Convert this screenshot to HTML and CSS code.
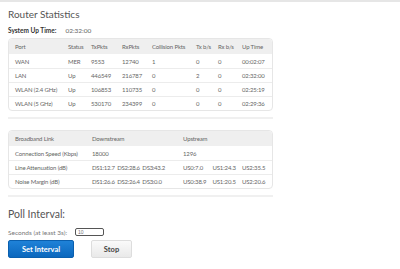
FILE: index.html
```html
<!DOCTYPE html>
<html lang="en">
<head>
  <meta charset="UTF-8">
  <title>Router Statistics</title>
  <link rel="stylesheet" href="styles.css">
</head>
<body>
  <div class="top-rule"></div>
  <main class="page">
    <h1>Router Statistics</h1>
    <p class="uptime"><b>System Up Time:</b><span>02:32:00</span></p>

    <table class="stats port-table">
      <colgroup>
        <col style="width:53px"><col style="width:23px"><col style="width:31px"><col style="width:30px">
        <col style="width:44px"><col style="width:22px"><col style="width:24px"><col>
      </colgroup>
      <thead>
        <tr><th>Port</th><th>Status</th><th>TxPkts</th><th>RxPkts</th><th>Collision Pkts</th><th>Tx b/s</th><th>Rx b/s</th><th>Up Time</th></tr>
      </thead>
      <tbody>
        <tr><td>WAN</td><td>MER</td><td>9553</td><td>12740</td><td>1</td><td>0</td><td>0</td><td>00:02:07</td></tr>
        <tr><td>LAN</td><td>Up</td><td>446549</td><td>216787</td><td>0</td><td>2</td><td>0</td><td>02:32:00</td></tr>
        <tr><td>WLAN (2.4 GHz)</td><td>Up</td><td>106853</td><td>110735</td><td>0</td><td>0</td><td>0</td><td>02:25:19</td></tr>
        <tr><td>WLAN (5 GHz)</td><td>Up</td><td>530170</td><td>234399</td><td>0</td><td>0</td><td>0</td><td>02:29:36</td></tr>
      </tbody>
    </table>

    <hr class="divider">

    <table class="stats link-table">
      <colgroup>
        <col style="width:77px"><col style="width:91px"><col>
      </colgroup>
      <thead>
        <tr><th>Broadband Link</th><th>Downstream</th><th>Upstream</th></tr>
      </thead>
      <tbody>
        <tr><td>Connection Speed (Kbps)</td><td>18000</td><td>1296</td></tr>
        <tr><td>Line Attenuation (dB)</td><td class="multi down"><span>DS1:12.7</span><span>DS2:28.6</span><span>DS3:43.2</span></td><td class="multi up"><span>US0:7.0</span><span>US1:24.3</span><span>US2:35.5</span></td></tr>
        <tr><td>Noise Margin (dB)</td><td class="multi down"><span>DS1:26.6</span><span>DS2:26.4</span><span>DS3:0.0</span></td><td class="multi up"><span>US0:38.9</span><span>US1:20.5</span><span>US2:20.6</span></td></tr>
      </tbody>
    </table>

    <hr class="divider">

    <h2>Poll Interval:</h2>
    <div class="poll-row">
      <label for="pollSecs">Seconds (at least 3s):</label>
      <input id="pollSecs" type="text" placeholder="10">
    </div>
    <div class="actions">
      <button class="btn btn-primary">Set Interval</button>
      <button class="btn btn-plain">Stop</button>
    </div>
  </main>
</body>
</html>
```

FILE: styles.css
```css
* {
  margin: 0;
  padding: 0;
  box-sizing: border-box;
}
body {
  font-family: 'Lato', 'Open Sans', sans-serif;
  background-color: #fff;
  color: #666;
}
.top-rule {
  height: 2px;
  background-color: #e6e6e6;
}
.page {
  padding: 0 8px;
  width: 281px;
}
h1 {
  font-size: 10px;
  font-weight: 400;
  color: #555;
  margin-top: 6px;
  line-height: 12px;
}
.uptime {
  font-size: 6.5px;
  margin-top: 6px;
  line-height: 10px;
  color: #444;
}
.uptime b {
  font-weight: 700;
  color: #333;
}
.uptime span {
  margin-left: 9px;
  color: #666;
}
.stats {
  width: 265px;
  border-collapse: separate;
  border-spacing: 0;
  table-layout: fixed;
  border: 1px solid #e6e6e6;
  border-radius: 4px;
  font-size: 6px;
  letter-spacing: -0.15px;
  color: #666;
  margin-top: 2px;
}
.stats th {
  background-color: #efefef;
  font-weight: 400;
  text-align: left;
  height: 15px;
  line-height: 15px;
  padding: 0 0 0 6px;
  white-space: nowrap;
}
.stats th:first-child {
  border-top-left-radius: 4px;
}
.stats th:last-child {
  border-top-right-radius: 4px;
}
.stats td {
  height: 14px;
  line-height: 13px;
  padding: 0 0 0 6px;
  white-space: nowrap;
  border-top: 1px solid #ececec;
}
.stats tbody tr:first-child td {
  border-top: none;
}
.multi span {
  display: inline-block;
}
.multi.down span {
  min-width: 21px;
  margin-right: 2.5px;
  letter-spacing: -0.25px;
}
.multi.up span {
  width: 29.5px;
}
.divider {
  border: none;
  height: 2px;
  background-color: #f0f0f0;
  width: 265px;
  margin: 6px 0 11px;
}
h2 {
  font-size: 10.5px;
  font-weight: 400;
  color: #555;
  margin-top: 8px;
  line-height: 12px;
}
.poll-row {
  display: flex;
  align-items: center;
  gap: 8px;
  margin-top: 8px;
  font-size: 6.5px;
  color: #777;
  height: 8px;
}
.poll-row input {
  width: 29px;
  height: 8px;
  border: 1px solid #555;
  border-radius: 2px;
  font-size: 5px;
  padding-left: 2px;
  color: #aaa;
}
.actions {
  display: flex;
  gap: 17px;
  margin-top: 4px;
}
.btn {
  height: 18px;
  border-radius: 2px;
  font-family: 'Lato', sans-serif;
  font-size: 7.5px;
  font-weight: 700;
  cursor: pointer;
}
.btn-primary {
  width: 66px;
  background: linear-gradient(#1f82d8, #0b67bd);
  border: 1px solid #0a5fae;
  color: #fff;
}
.btn-plain {
  width: 41px;
  background: linear-gradient(#fafafa, #e9e9e9);
  border: 1px solid #ddd;
  color: #444;
}
```
